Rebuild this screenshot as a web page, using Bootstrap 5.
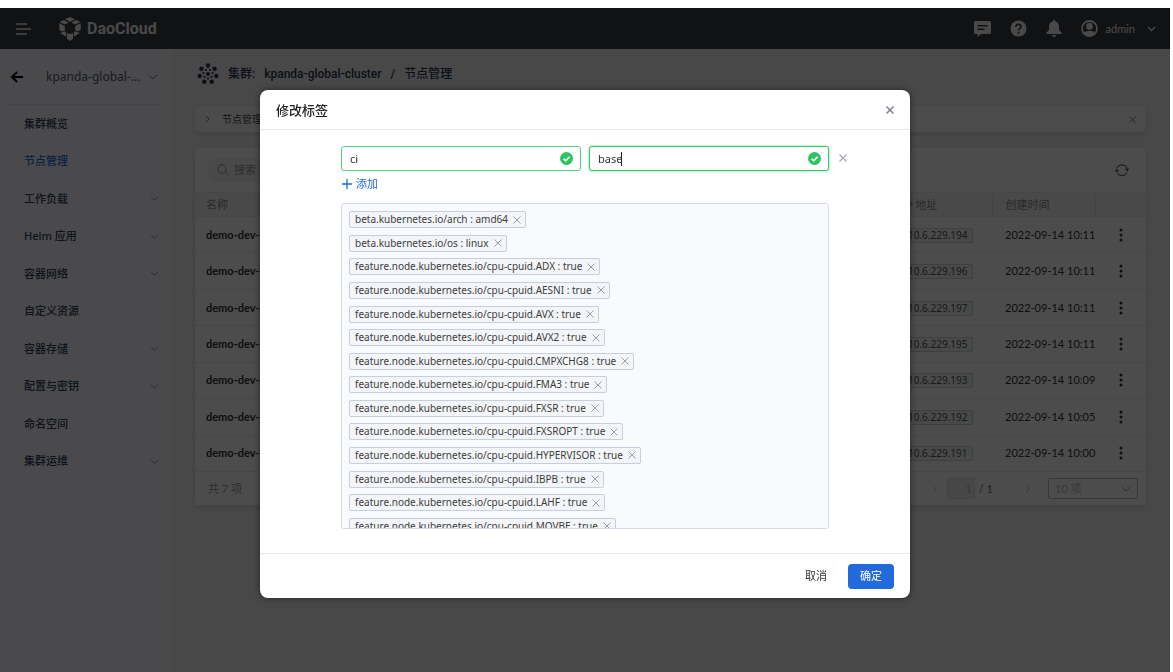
<!DOCTYPE html>
<html lang="zh-CN">
<head>
<meta charset="utf-8">
<meta name="viewport" content="width=device-width, initial-scale=1">
<title>DaoCloud - 节点管理</title>
<link rel="stylesheet" href="https://cdn.jsdelivr.net/npm/bootstrap@5.3.0/dist/css/bootstrap.min.css">
<style>
  body { font-family: Lato, "Noto Sans CJK SC", sans-serif; font-size: 11px; line-height: 16px; color: #222; background: #fff; padding: 8px 3px 0 0; }
  svg { display: block; flex: none; fill: none; stroke: currentColor; }
  .solid { fill: currentColor; stroke: none; }
  button.plain { background: none; border: 0; padding: 0; color: inherit; }
  .shell { min-height: calc(100vh - 8px); background: #f1f2f2; }
  .topbar { height: 41px; background: #393c40; color: #f4f4f4; padding: 0 12px 0 16px; }
  .topbar-tools { gap: 19px; }
  .brand-name { font: 700 16px/20px Roboto, sans-serif; margin-left: 6px; }
  .side { width: 171px; background: #f7f9fd; padding: 0 8px; }
  .cluster-pick { height: 56px; border-bottom: 1px solid #e3e6ec; font: 12px/16px "Noto Sans", sans-serif; color: #555b66; }
  .cluster-pick a { padding: 0 2px; }
  .menu-grid { height: 375px; display: grid; grid-auto-rows: 1fr; }
  .menu-grid a { display: flex; align-items: center; justify-content: space-between; padding: 0 4px 0 16px; color: #33405c; font-weight: 500; text-decoration: none; font-family: "Noto Sans", "Noto Sans CJK SC", sans-serif; }
  .menu-grid a.current { color: #2a6fdf; }
  .menu-grid svg { color: #8a909c; }
  .content-area { padding: 0 24px; }
  .crumbs { height: 49px; font: 500 12px/16px Roboto, "Noto Sans CJK SC", sans-serif; color: #2b3550; padding-left: 2px; gap: 9px; }
  .tip { height: 26px; margin-top: 8px; background: #fafafa; border-radius: 5px; box-shadow: 0 2px 6px #0002; font-size: 10px; color: #444; padding: 0 10px; }
  .panel { margin-top: 16px; background: #fff; border-radius: 6px 6px 0 0; box-shadow: 0 2px 6px #0002; }
  .tools { height: 44px; padding: 0 17px 0 12px; background: #fbfdfc; border-radius: 6px 6px 0 0; }
  .search-box { width: 240px; height: 24px; border-radius: 12px; background: #f5f5f5; color: #999; padding: 0 10px; gap: 5px; }
  .search-box input { background: none; border: 0; width: 180px; padding: 0; font-size: 11px; }
  .search-box input::placeholder { color: #999; }
  .node-table { font-size: 11px; height: 280px; margin: 0; table-layout: fixed; --bs-table-bg: transparent; }
  .node-table > * > tr > * { padding: 0 11px; border-bottom: 1px solid #e9e9e9; color: #333; vertical-align: middle; white-space: nowrap; }
  .node-table > * > tr > :nth-child(2) { padding-left: 8px; }
  .node-table > * > tr > :nth-child(3) { padding: 0 0 0 13px; }
  .node-table > * > tr > :nth-child(4) { padding: 0 0 0 16px; }
  .node-table > thead > tr > * { background: #f4f4f4; color: #8c8c8c; font-weight: 400; height: 24px; border-top: 1px solid #e9e9e9; }
  .node-table > thead > tr > .split { border-right: 1px solid #e4e4e4; }
  .node-table td:first-child { font-weight: 700; }
  .node-table button { display: block; padding: 0 8px; }
  .ip { font: 10px/13px "Noto Sans", sans-serif; display: inline-block; border: 1px solid #ccd2d8; border-radius: 2px; background: #f2f3f5; padding: 0 4px; color: #555; }
  .pager { height: 33px; padding: 0 8px 0 13px; color: #999; }
  .page-no { width: 28px; height: 21px; border: 1px solid #e4e4e4; border-radius: 2px; background: #eee; color: #bbb; text-align: right; padding: 0 2px; font-size: 11px; margin-left: 9px; }
  .page-next { margin: 0 18px 0 32px; }
  .page-size { width: 90px; height: 21px; border: 1px solid #bbb; border-radius: 2px; color: #bbb; font-size: 11px; line-height: 16px; padding: 0 20px 0 6px; background-position: right 6px center; background-size: 10px; background-image: url("data:image/svg+xml,%3csvg xmlns='http://www.w3.org/2000/svg' viewBox='0 0 10 10'%3e%3cpath fill='none' stroke='%23999' d='M1 3l4 4 4-4'/%3e%3c/svg%3e"); }
  .veil { position: absolute; inset: 0; background: rgba(0,0,0,.7); padding: 24px 16px 16px; }
  .dialog { width: 650px; max-width: 100%; background: #fff; border-radius: 8px; box-shadow: 0 0 6px #0008; color: #333; }
  .dialog-head { height: 40px; padding: 0 16px; border-bottom: 1px solid #e6e8ee; }
  .dialog-head h1 { font-size: 13px; line-height: 18px; font-weight: 500; margin: 0; color: #222; }
  .dialog-body { padding: 16px 81px 24px; }
  .pair { display: grid; grid-template-columns: 1fr 1fr; gap: 8px; position: relative; }
  .pair .form-control { height: 25px; min-height: 0; border: 1px solid #4cd07d; border-radius: 3px; padding: 0 28px 0 8px; font: 11px/16px "Noto Sans", sans-serif; color: #333; box-shadow: none; }
  .pair .form-control:focus { box-shadow: 0 0 3px #7be0a0; border-color: #35c766; caret-color: transparent; }
  .pair .ok-mark { position: absolute; right: 8px; top: 6px; }
  .pair .text-cursor { position: absolute; left: 32px; top: 6px; width: 1px; height: 14px; background: #222; }
  .pair .drop-pair { position: absolute; left: 100%; top: 8px; margin-left: 10px; color: #a3a9b5; }
  .add { height: 25px; color: #2468dd !important; gap: 4px; padding-left: 1px !important; }
  .tag-scroll { height: 326px; margin-top: 7px; overflow-y: auto; scrollbar-width: none; border: 1px solid #d6dae2; border-radius: 3px; background: #f8fafd; padding: 4px 7px; }
  .tag-scroll::-webkit-scrollbar { display: none; }
  .tag-grid { height: 330px; display: grid; grid-auto-rows: 1fr; justify-items: start; align-items: center; margin: 0; }
  .label-tag { display: flex; align-items: center; gap: 5px; height: 17px; border: 1px solid #c9cedb; border-radius: 2px; background: #f3f5f9; padding: 0 4px 0 5px; font: 10px/15px "Noto Sans", sans-serif; color: #3c3c3c; white-space: nowrap; }
  .label-tag button { color: #989eaa !important; }
  .dialog-foot { height: 45px; border-top: 1px solid #e6e8ee; padding: 0 16px; gap: 9px; }
  .dialog-foot .btn { font-size: 11px; line-height: 16px; padding: 0 12px; height: 25px; border: 0; border-radius: 4px; color: #333; }
  .dialog-foot .btn-primary { background: #2269db; color: #fff; }
</style>
</head>
<body>
<svg width="0" height="0" class="position-absolute" aria-hidden="true">
  <symbol id="chev" viewBox="0 0 10 10"><path d="M1 3l4 4 4-4"/></symbol>
  <symbol id="cross" viewBox="0 0 8 8"><path d="M.5.5l7 7M7.500.5l-7 7"/></symbol>
  <symbol id="dots" viewBox="0 0 4 14"><g class="solid"><circle cx="2" cy="2" r="1.500"/><circle cx="2" cy="7" r="1.500"/><circle cx="2" cy="12" r="1.500"/></g></symbol>
  <symbol id="okay" viewBox="0 0 12 12"><circle cx="6" cy="6" r="6" fill="#2dc463" stroke="none"/><path d="M3.300 6.200l2 1.900 3.500-3.700" stroke="#fff" stroke-width="1.500"/></symbol>
</svg>

<div class="shell position-relative d-flex flex-column">
  <header class="topbar d-flex align-items-center">
    <button class="plain" aria-label="菜单"><svg width="15" height="12" viewBox="0 0 15 12" stroke-width="1.300"><path d="M0 1h11M0 6h15M0 11h11"/></svg></button>
    <a href="#" class="d-flex align-items-center ms-4 ps-1 text-reset text-decoration-none">
      <svg class="solid" width="22" height="24" viewBox="0 0 22 24"><path d="M11 0l5 2.200L11 4.800 6 2.200zM4.800 2.900l5 2.500-4 2.200L.6 5.100zM17.200 2.900l-5 2.500 4 2.200 5.200-2.500zM.3 6.300l5.500 2.800v4.400l-2.600 1L.3 13zM21.700 6.300l-5.500 2.800v4.400l2.600 1 2.900-1.500zM1.300 16l4.800-1.700 1 1.200v4.300zM20.700 16l-4.800-1.700-1 1.200v4.300zM8 15.800l3 1.500 3-1.500v6L11 24l-3-2.200z"/></svg>
      <span class="brand-name">DaoCloud</span>
    </a>
    <div class="topbar-tools d-flex align-items-center ms-auto">
      <svg class="solid" width="17" height="16" viewBox="0 0 17 16"><path fill-rule="evenodd" d="M1.500 0h14A1.500 1.500 0 0117 1.500v10a1.500 1.500 0 01-1.500 1.500H7l-3.500 3v-3h-2A1.500 1.500 0 010 11.500v-10A1.500 1.500 0 011.500 0zM3.500 4v1.500h10V4zM3.500 7.500V9h7V7.500z"/></svg>
      <svg width="17" height="17" viewBox="0 0 17 17"><circle class="solid" cx="8.500" cy="8.500" r="8"/><path stroke="#393c40" stroke-width="1.700" d="M6 6.700a2.500 2.300 0 115 0c0 1.700-2.500 1.700-2.500 3.600M8.500 11.700v1.700"/></svg>
      <svg class="solid" width="16" height="17" viewBox="0 0 16 17"><path d="M8 0c1 0 1.300.6 1.300 1.400C12 2 13 4 13 6.500V10l2.500 2.500V14H.5v-1.500L3 10V6.500C3 4 4 2 6.700 1.400 6.700.6 7 0 8 0zM6 15h4a2 2 0 01-4 0z"/></svg>
      <button class="plain d-flex align-items-center">
        <svg width="17" height="17" viewBox="0 0 17 17"><circle cx="8.500" cy="8.500" r="7.500" stroke-width="1.800"/><circle class="solid" cx="8.500" cy="6.400" r="3.300"/><path class="solid" d="M2.500 13c3-3 9-3 12 0a7.500 7.500 0 01-12 0z"/></svg>
        <span class="ms-2">admin</span>
        <svg class="ms-2" width="15" height="8" viewBox="3 0 15 8"><path d="M8 2l3.500 3.500L15 2" stroke-width="1.300"/></svg>
      </button>
    </div>
  </header>

  <div class="d-flex flex-grow-1">
    <nav class="side flex-shrink-0">
      <div class="cluster-pick d-flex align-items-center">
        <a href="#" aria-label="返回"><svg width="14" height="12" viewBox="0 0 14 12" color="#000" stroke-width="2"><path d="M13 6H2M7 1L2 6l5 5"/></svg></a>
        <button class="plain d-flex align-items-center flex-grow-1 ms-3"><span class="ps-1">kpanda-global-...</span><svg class="ms-2" width="10" height="10" color="#8a909c"><use href="#chev"/></svg></button>
      </div>
      <div class="menu-grid">
        <a href="#">集群概览</a>
        <a href="#" class="current">节点管理</a>
        <a href="#">工作负载<svg width="9" height="9"><use href="#chev"/></svg></a>
        <a href="#">Helm 应用<svg width="9" height="9"><use href="#chev"/></svg></a>
        <a href="#">容器网络<svg width="9" height="9"><use href="#chev"/></svg></a>
        <a href="#">自定义资源</a>
        <a href="#">容器存储<svg width="9" height="9"><use href="#chev"/></svg></a>
        <a href="#">配置与密钥<svg width="9" height="9"><use href="#chev"/></svg></a>
        <a href="#">命名空间</a>
        <a href="#">集群运维<svg width="9" height="9"><use href="#chev"/></svg></a>
      </div>
    </nav>

    <main class="content-area flex-grow-1">
      <div class="crumbs d-flex align-items-center">
        <svg class="solid" width="22" height="22" viewBox="0 0 22 22"><circle cx="11" cy="11" r="2"/><circle cx="11" cy="2.500" r="2.200"/><circle cx="17.600" cy="5.700" r="2.200"/><circle cx="19.300" cy="12.900" r="2.200"/><circle cx="14.700" cy="18.700" r="2.200"/><circle cx="7.300" cy="18.700" r="2.200"/><circle cx="2.700" cy="12.900" r="2.200"/><circle cx="4.400" cy="5.700" r="2.200"/><circle cx="9" cy="7" r="1.100"/><circle cx="13" cy="7" r="1.100"/><circle cx="15.400" cy="10" r="1.100"/><circle cx="14.500" cy="13.800" r="1.100"/><circle cx="11" cy="15.500" r="1.100"/><circle cx="7.500" cy="13.800" r="1.100"/><circle cx="6.600" cy="10" r="1.100"/></svg>
        <span>集群:</span><span>kpanda-global-cluster</span><span>/</span><span>节点管理</span>
      </div>
      <div class="tip d-flex align-items-center">
        <svg width="5" height="8" viewBox="0 0 5 8" color="#888"><path d="M1 1l3 3-3 3"/></svg>
        <span class="ms-2 ps-1 flex-grow-1">节点管理</span>
        <button class="plain" aria-label="关闭提示"><svg width="7" height="7" color="#777c88"><use href="#cross"/></svg></button>
      </div>
      <section class="panel">
        <div class="tools d-flex align-items-center justify-content-between">
          <label class="search-box d-flex align-items-center"><svg width="12" height="12" viewBox="0 0 12 12"><circle cx="5" cy="5" r="4.300"/><path d="M8.200 8.200L11.500 11.500"/></svg><input type="search" placeholder="搜索" aria-label="搜索"></label>
          <button class="plain" aria-label="刷新"><svg width="14" height="14" viewBox="0 0 14 14" color="#444"><path d="M2 5A5.500 5.500 0 0112 5M12 9.500A5.500 5.500 0 012 9.500"/><path class="solid" d="M10 5.500h4l-1.500 3zM0 8.500h4l-2.500-3z"/></svg></button>
        </div>
        <table class="table node-table">
          <colgroup><col><col style="width:97px"><col style="width:103px"><col style="width:51px"></colgroup>
          <thead><tr><th>名称</th><th class="split">IP 地址</th><th class="split">创建时间</th><th></th></tr></thead>
          <tbody>
            <tr><td>demo-dev-</td><td><span class="ip">10.6.229.194</span></td><td>2022-09-14 10:11</td><td><button class="plain px-2" aria-label="更多"><svg width="4" height="14"><use href="#dots"/></svg></button></td></tr>
            <tr><td>demo-dev-</td><td><span class="ip">10.6.229.196</span></td><td>2022-09-14 10:11</td><td><button class="plain px-2" aria-label="更多"><svg width="4" height="14"><use href="#dots"/></svg></button></td></tr>
            <tr><td>demo-dev-</td><td><span class="ip">10.6.229.197</span></td><td>2022-09-14 10:11</td><td><button class="plain px-2" aria-label="更多"><svg width="4" height="14"><use href="#dots"/></svg></button></td></tr>
            <tr><td>demo-dev-</td><td><span class="ip">10.6.229.195</span></td><td>2022-09-14 10:11</td><td><button class="plain px-2" aria-label="更多"><svg width="4" height="14"><use href="#dots"/></svg></button></td></tr>
            <tr><td>demo-dev-</td><td><span class="ip">10.6.229.193</span></td><td>2022-09-14 10:09</td><td><button class="plain px-2" aria-label="更多"><svg width="4" height="14"><use href="#dots"/></svg></button></td></tr>
            <tr><td>demo-dev-</td><td><span class="ip">10.6.229.192</span></td><td>2022-09-14 10:05</td><td><button class="plain px-2" aria-label="更多"><svg width="4" height="14"><use href="#dots"/></svg></button></td></tr>
            <tr><td>demo-dev-</td><td><span class="ip">10.6.229.191</span></td><td>2022-09-14 10:00</td><td><button class="plain px-2" aria-label="更多"><svg width="4" height="14"><use href="#dots"/></svg></button></td></tr>
          </tbody>
        </table>
        <div class="pager d-flex align-items-center">
          <span class="me-auto">共 7 项</span>
          <button class="plain" aria-label="上一页"><svg width="5" height="8" viewBox="0 0 5 8" color="#bbb"><path d="M4 1L1 4l3 3"/></svg></button>
          <input class="page-no" value="1" aria-label="页码"><span class="ms-1 text-secondary">/ 1</span>
          <button class="plain page-next" aria-label="下一页"><svg width="5" height="8" viewBox="0 0 5 8" color="#bbb"><path d="M1 1l3 3-3 3"/></svg></button>
          <select class="form-select page-size" aria-label="每页条数"><option>10 项</option></select>
        </div>
      </section>
    </main>
  </div>

  <div class="veil d-flex align-items-center justify-content-center">
    <div class="dialog" role="dialog" aria-labelledby="dlg-title">
      <div class="dialog-head d-flex align-items-center justify-content-between">
        <h1 id="dlg-title">修改标签</h1>
        <button class="plain" aria-label="关闭"><svg width="8" height="8" color="#7b8190" stroke-width="1.500"><use href="#cross"/></svg></button>
      </div>
      <div class="dialog-body">
        <div class="pair">
          <div class="position-relative"><input class="form-control" value="ci" aria-label="键"><svg class="ok-mark" width="13" height="13"><use href="#okay"/></svg></div>
          <div class="position-relative"><input class="form-control" id="val" value="base" aria-label="值"><span class="text-cursor"></span><svg class="ok-mark" width="13" height="13"><use href="#okay"/></svg></div>
          <button class="plain drop-pair" aria-label="移除"><svg width="8" height="8" stroke-width="1.200"><use href="#cross"/></svg></button>
        </div>
        <button class="plain add d-flex align-items-center"><svg width="10" height="10" viewBox="0 0 10 10" stroke-width="1.300"><path d="M5 0v10M0 5h10"/></svg>添加</button>
        <div class="tag-scroll">
          <ul class="tag-grid list-unstyled">
            <li class="label-tag">beta.kubernetes.io/arch : amd64<button class="plain" aria-label="移除"><svg width="8" height="8"><use href="#cross"/></svg></button></li>
            <li class="label-tag">beta.kubernetes.io/os : linux<button class="plain" aria-label="移除"><svg width="8" height="8"><use href="#cross"/></svg></button></li>
            <li class="label-tag">feature.node.kubernetes.io/cpu-cpuid.ADX : true<button class="plain" aria-label="移除"><svg width="8" height="8"><use href="#cross"/></svg></button></li>
            <li class="label-tag">feature.node.kubernetes.io/cpu-cpuid.AESNI : true<button class="plain" aria-label="移除"><svg width="8" height="8"><use href="#cross"/></svg></button></li>
            <li class="label-tag">feature.node.kubernetes.io/cpu-cpuid.AVX : true<button class="plain" aria-label="移除"><svg width="8" height="8"><use href="#cross"/></svg></button></li>
            <li class="label-tag">feature.node.kubernetes.io/cpu-cpuid.AVX2 : true<button class="plain" aria-label="移除"><svg width="8" height="8"><use href="#cross"/></svg></button></li>
            <li class="label-tag">feature.node.kubernetes.io/cpu-cpuid.CMPXCHG8 : true<button class="plain" aria-label="移除"><svg width="8" height="8"><use href="#cross"/></svg></button></li>
            <li class="label-tag">feature.node.kubernetes.io/cpu-cpuid.FMA3 : true<button class="plain" aria-label="移除"><svg width="8" height="8"><use href="#cross"/></svg></button></li>
            <li class="label-tag">feature.node.kubernetes.io/cpu-cpuid.FXSR : true<button class="plain" aria-label="移除"><svg width="8" height="8"><use href="#cross"/></svg></button></li>
            <li class="label-tag">feature.node.kubernetes.io/cpu-cpuid.FXSROPT : true<button class="plain" aria-label="移除"><svg width="8" height="8"><use href="#cross"/></svg></button></li>
            <li class="label-tag">feature.node.kubernetes.io/cpu-cpuid.HYPERVISOR : true<button class="plain" aria-label="移除"><svg width="8" height="8"><use href="#cross"/></svg></button></li>
            <li class="label-tag">feature.node.kubernetes.io/cpu-cpuid.IBPB : true<button class="plain" aria-label="移除"><svg width="8" height="8"><use href="#cross"/></svg></button></li>
            <li class="label-tag">feature.node.kubernetes.io/cpu-cpuid.LAHF : true<button class="plain" aria-label="移除"><svg width="8" height="8"><use href="#cross"/></svg></button></li>
            <li class="label-tag">feature.node.kubernetes.io/cpu-cpuid.MOVBE : true<button class="plain" aria-label="移除"><svg width="8" height="8"><use href="#cross"/></svg></button></li>
          </ul>
        </div>
      </div>
      <div class="dialog-foot d-flex align-items-center justify-content-end">
        <button class="btn">取消</button>
        <button class="btn btn-primary">确定</button>
      </div>
    </div>
  </div>
</div>
<script src="https://cdn.jsdelivr.net/npm/bootstrap@5.3.0/dist/js/bootstrap.bundle.min.js"></script>
<script>
  // put the text cursor at the end of the value being edited
  const val = document.getElementById('val');
  val.focus();
  val.setSelectionRange(val.value.length, val.value.length);
</script>
</body>
</html>
